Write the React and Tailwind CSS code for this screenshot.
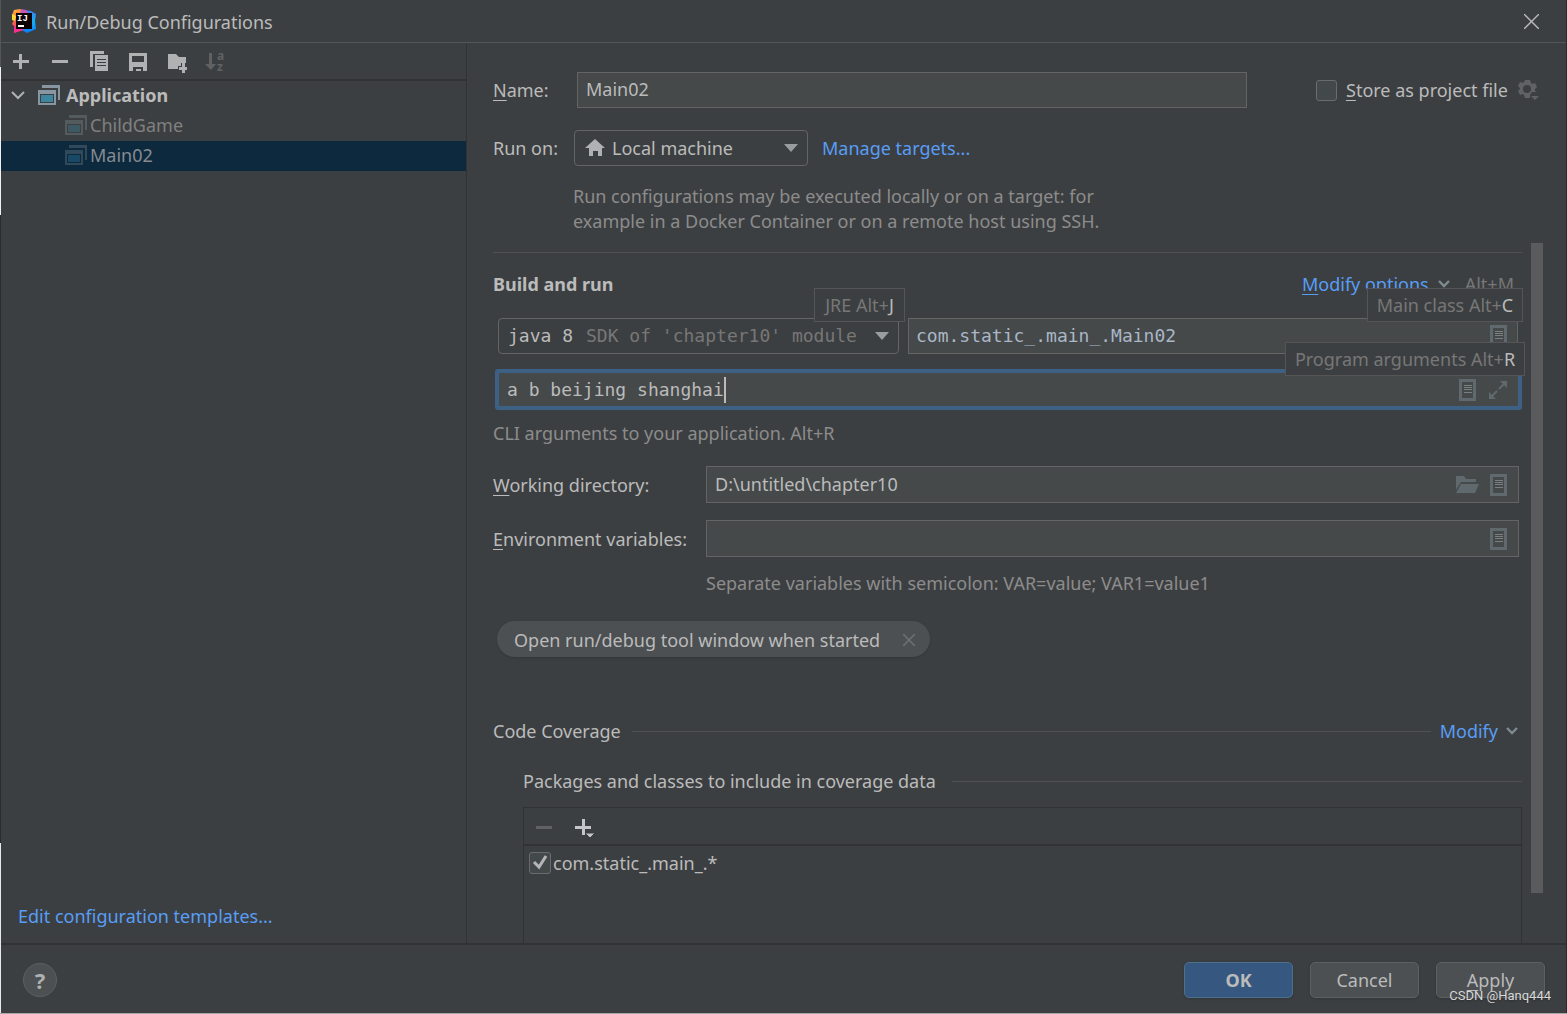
import { useState } from "react";

const labelCls = "shrink-0 text-[#bbbbbb]";
const fieldCls = "flex items-center border border-[#646464] bg-[#45494a] text-[#bbbbbb]";
const tipCls =
  "pointer-events-none absolute z-10 flex h-[34px] items-center justify-center whitespace-nowrap border border-[#555555] bg-[#3c3f41] text-[#777777]";
const monoCls = "font-['DejaVu_Sans_Mono',monospace]";
const keyCls = "underline underline-offset-3";

function Logo() {
  return (
    <svg width="24" height="24" viewBox="0 0 24 24" aria-hidden="true">
      <defs>
        <linearGradient id="warm" x1="0" y1="0" x2="0.3" y2="1">
          <stop offset="0" stopColor="#fcc13c" />
          <stop offset="0.45" stopColor="#fa6a3c" />
          <stop offset="1" stopColor="#fe2d8c" />
        </linearGradient>
        <linearGradient id="cool" x1="0" y1="0" x2="0" y2="1">
          <stop offset="0" stopColor="#3b7df0" />
          <stop offset="0.5" stopColor="#12b0f5" />
          <stop offset="1" stopColor="#087cfa" />
        </linearGradient>
      </defs>
      <path d="M13 1l6 1 5 3-1 7 1 8-9 4-7-4V6z" fill="url(#cool)" />
      <path d="M2 1l6-1 5 3-2 8-1 9-8 4 1-6-3-3 2-4-2-5z" fill="url(#warm)" />
      <path d="M9 0l5 1 3 4H8z" fill="#c757b8" />
      <path d="M0 5l4 2-1 5-3-1z" fill="#fdd835" />
      <path d="M2 17l6 2 4 2-10 3z" fill="#f7308f" />
      <rect x="4" y="4" width="16" height="16" fill="#0a0306" />
      <text x="5" y="12" fill="#ffffff" fontSize="9" fontWeight="700" fontFamily="Liberation Mono, monospace">
        IJ
      </text>
      <path d="M6 16h6v2H6z" fill="#ffffff" />
    </svg>
  );
}

function AppIcon({ frame, fill }) {
  return (
    <svg width="22" height="20" viewBox="0 0 22 20" className="shrink-0" aria-hidden="true">
      <path d="M4 0h18v15h-2V3H4z" fill={frame} />
      <path fillRule="evenodd" d="M0 5h18v15H0zM2 9v9h14V9z" fill={frame} />
      <path d="M3 10h12v7H3z" fill={fill} />
    </svg>
  );
}

function ListIcon() {
  return (
    <svg width="17" height="22" viewBox="0 0 17 22" aria-hidden="true">
      <path fillRule="evenodd" d="M0 0h17v22H0zM3 3v16h11V3z" fill="#5f696e" />
      <path d="M5 6h8v1H5zM5 8h8v1H5zM5 10h8v1H5zM5 13h8v1H5z" fill="#7a7f82" />
    </svg>
  );
}

function Triangle() {
  return (
    <svg width="14" height="8" viewBox="0 0 14 8" className="shrink-0" aria-hidden="true">
      <path d="M0 0h14L7 8z" fill="#9a9da0" />
    </svg>
  );
}

function Chevron() {
  return (
    <svg width="12" height="8" viewBox="0 0 12 8" fill="none" stroke="#7f8b91" strokeWidth="2.4" aria-hidden="true">
      <path d="M1 1l5 5 5-5" />
    </svg>
  );
}

function Toolbar() {
  return (
    <div className="flex h-[38px] shrink-0 items-center gap-[17px] border-b-2 border-[#323232] pl-2 pt-px">
      <button aria-label="Add" className="size-[22px]">
        <svg width="22" height="22" viewBox="0 0 22 22" fill="#afb1b3">
          <path d="M4 9h16v3H4zM10 3h3v15h-3z" />
        </svg>
      </button>
      <button aria-label="Remove" className="size-[22px]">
        <svg width="22" height="22" viewBox="0 0 22 22" fill="#afb1b3">
          <path d="M4 9h16v3H4z" />
        </svg>
      </button>
      <button aria-label="Copy" className="size-[22px]">
        <svg width="22" height="22" viewBox="0 0 22 22" fill="#afb1b3">
          <path d="M3 0h14v3H6v13H3z" />
          <path fillRule="evenodd" d="M8 4h13v16H8zM10 8h9v1h-9zM10 11h9v1h-9zM10 14h9v1h-9z" />
        </svg>
      </button>
      <button aria-label="Save" className="size-[22px]">
        <svg width="22" height="22" viewBox="0 0 22 22" fill="#afb1b3">
          <path fillRule="evenodd" d="M3 2h18v18h-4v-4H7v4H3zM6 5v6h12V5z" />
          <path d="M10 18h5v2h-5z" />
        </svg>
      </button>
      <button aria-label="New folder" className="size-[22px]">
        <svg width="22" height="22" viewBox="0 0 22 22" fill="#afb1b3">
          <path d="M3 3h8l3 3h7v6h-5v3h-3v3H3z" />
          <path d="M17 12h3v4h4v3h-4v3h-3v-3h-3v-3h3z" />
        </svg>
      </button>
      <button aria-label="Sort" disabled className="size-[22px]">
        <svg width="22" height="22" viewBox="0 0 22 22" fill="#5f6163">
          <path d="M5 2h3v11h4l-5 6-6-6h4z" />
          <text x="13" y="9" fontSize="12" fontWeight="700" fontFamily="Open Sans, sans-serif">a</text>
          <text x="13" y="20" fontSize="12" fontWeight="700" fontFamily="Open Sans, sans-serif">z</text>
        </svg>
      </button>
    </div>
  );
}

function Sidebar() {
  return (
    <aside className="flex w-[466px] shrink-0 flex-col border-r border-[#323232]">
      <Toolbar />
      <ul className="flex-1">
        <li>
          <div className="flex h-[30px] items-center pb-[2px] pl-[10px] font-bold text-[#bbbbbb]">
            <svg width="14" height="9" viewBox="0 0 14 9" fill="none" stroke="#afb1b3" strokeWidth="2">
              <path d="M1 1l6 6 6-6" />
            </svg>
            <span className="ml-[13px] mr-[6px] flex">
              <AppIcon frame="#8796a0" fill="#3e86a0" />
            </span>
            Application
          </div>
          <ul>
            <li className="flex h-[30px] items-center gap-[3px] pb-[2px] pl-16 text-[#808080]">
              <AppIcon frame="#535b5f" fill="#3d5a64" />
              ChildGame
            </li>
            <li className="flex h-[30px] items-center gap-[3px] bg-[#0d293e] pb-[2px] pl-16 text-[#858b90]">
              <AppIcon frame="#304a5b" fill="#184a66" />
              Main02
            </li>
          </ul>
        </li>
      </ul>
      <a href="#templates" className="mb-[14px] ml-[17px] text-[#589df6]">
        Edit configuration templates...
      </a>
    </aside>
  );
}

function TargetSection() {
  const [name, setName] = useState("Main02");
  return (
    <section className="h-[200px] shrink-0 pl-[26px] pr-[27px] pt-[29px]">
      <div className="flex items-center">
        <label htmlFor="name" className={`${labelCls} w-[84px]`}>
          <span className={keyCls}>N</span>ame:
        </label>
        <input
          id="name"
          value={name}
          onChange={(e) => setName(e.target.value)}
          className={`${fieldCls} h-9 min-w-0 flex-1 px-2 pb-[2px] outline-none`}
        />
        <label className="ml-[69px] flex items-center text-[#bbbbbb]">
          <input
            type="checkbox"
            className="mr-[9px] size-[21px] appearance-none rounded-[3px] border border-[#6b6b6b] bg-[#43494a]"
          />
          <span className="w-[166px] whitespace-nowrap">
            <span className={keyCls}>S</span>tore as project file
          </span>
        </label>
        <button aria-label="Storage settings" className="ml-[6px]">
          <svg width="21" height="22" viewBox="0 0 21 22" fill="#606264">
            <path
              fillRule="evenodd"
              d="M7 1h5l1 3 1 1 3-1 2 4-2 2v2l2 1h-5l-2 3v3H7l-1-3-1-1-3 1-2-4 2-2V9L0 7l2-4 3 1 1-1zM9 6a4 4 0 1 0 0 8 4 4 0 0 0 0-8z"
            />
            <path d="M13 17h8l-4 4z" />
          </svg>
        </button>
      </div>

      <div className="mt-[22px] flex items-center">
        <label htmlFor="target" className={`${labelCls} w-[81px]`}>Run on:</label>
        <div className="flex h-9 w-[234px] items-center rounded-[4px] border border-[#646464] pl-[10px] pr-[9px]">
          <svg width="20" height="18" viewBox="0 0 20 18" fill="#afb1b3" className="shrink-0">
            <path d="M10 0l10 9h-3v8h-4v-5H8v5H4V9H0z" />
          </svg>
          <select id="target" className="ml-[7px] flex-1 appearance-none text-[#bbbbbb] outline-none">
            <option>Local machine</option>
          </select>
          <Triangle />
        </div>
        <a href="#targets" className="ml-[14px] text-[#589df6]">Manage targets...</a>
      </div>

      <p className="ml-[80px] mt-[18px] w-[550px] leading-[25px] text-[#8c8c8c]">
        Run configurations may be executed locally or on a target: for
        <br />
        example in a Docker Container or on a remote host using SSH.
      </p>
    </section>
  );
}

function RunSection() {
  const [mainClass, setMainClass] = useState("com.static_.main_.Main02");
  const [args, setArgs] = useState("a b beijing shanghai");
  const [dir, setDir] = useState("D:\\untitled\\chapter10");
  const [env, setEnv] = useState("");

  return (
    <>
      <div className="mt-[18px] flex h-[26px] items-center">
        <h2 className="flex-1 font-bold text-[#bbbbbb]">Build and run</h2>
        <button className="flex items-center gap-[9px] text-[#589df6]">
          <span>
            <span className={keyCls}>M</span>odify options
          </span>
          <Chevron />
        </button>
        <span className="ml-[15px] mr-[8px] text-[#777777]">Alt+M</span>
      </div>

      <div className="mt-[21px] flex h-9 gap-[9px] pl-[5px] pr-1">
        <div className="relative flex w-[401px] shrink-0 items-center rounded-[4px] border border-[#646464] px-[9px]">
          <select aria-label="JRE" className={`${monoCls} appearance-none text-[#bbbbbb] outline-none`}>
            <option>java 8</option>
          </select>
          <span className={`${monoCls} ml-[12px] flex-1 whitespace-nowrap text-[#777777]`}>
            SDK of 'chapter10' module
          </span>
          <Triangle />
          <div className={`${tipCls} -right-[7px] -top-[31px] w-[91px]`}>
            JRE Alt+<span className="text-[#bbbbbb]">J</span>
          </div>
        </div>
        <div className={`${fieldCls} relative min-w-0 flex-1 pl-[7px] pr-[10px]`}>
          <input
            aria-label="Main class"
            value={mainClass}
            onChange={(e) => setMainClass(e.target.value)}
            className={`${monoCls} min-w-0 flex-1 text-[#a9b7c6] outline-none`}
          />
          <button aria-label="Browse classes">
            <ListIcon />
          </button>
          <div className={`${tipCls} -right-[6px] -top-[31px] w-[156px]`}>
            Main class Alt+<span className="text-[#bbbbbb]">C</span>
          </div>
        </div>
      </div>

      <div className="relative ml-[2px] mt-[15px] flex h-[41px] items-center rounded-[3px] border-4 border-[#3d6185] bg-[#45494a] pl-[8px] pr-[11px]">
        <div className="flex flex-1 items-center">
          <input
            aria-label="Program arguments"
            value={args}
            onChange={(e) => setArgs(e.target.value)}
            className={`${monoCls} field-sizing-content text-[#bbbbbb] caret-transparent outline-none`}
          />
          <span className="h-[26px] w-[2px] bg-[#bbbbbb]" />
        </div>
        <button aria-label="Insert macros">
          <ListIcon />
        </button>
        <button aria-label="Expand" className="ml-[13px]">
          <svg width="18" height="18" viewBox="0 0 18 18" fill="#5f696e" stroke="#5f696e">
            <path d="M11 0h7v7zM0 11v7h7z" stroke="none" />
            <path d="M15 3l-5 5M3 15l5-5" strokeWidth="2" />
          </svg>
        </button>
        <div className={`${tipCls} -right-[7px] -top-[31px] w-[240px]`}>
          Program arguments Alt+<span className="text-[#bbbbbb]">R</span>
        </div>
      </div>
      <p className="mt-[10px] text-[#8c8c8c]">CLI arguments to your application. Alt+R</p>

      <div className="mt-5 flex items-center pr-[3px]">
        <label htmlFor="dir" className={`${labelCls} w-[213px]`}>
          <span className={keyCls}>W</span>orking directory:
        </label>
        <div className={`${fieldCls} h-[37px] flex-1 pl-2 pr-[11px]`}>
          <input
            id="dir"
            value={dir}
            onChange={(e) => setDir(e.target.value)}
            className="min-w-0 flex-1 pb-[2px] outline-none"
          />
          <button aria-label="Browse directories">
            <svg width="23" height="17" viewBox="0 0 23 17" fill="#5f696e">
              <path d="M0 0h8l2 3h10v3H5L0 14z" />
              <path d="M5 8h18l-4 9H0z" />
            </svg>
          </button>
          <button aria-label="Insert macros" className="ml-[11px]">
            <ListIcon />
          </button>
        </div>
      </div>

      <div className="mt-[17px] flex items-center pr-[3px]">
        <label htmlFor="env" className={`${labelCls} w-[213px]`}>
          <span className={keyCls}>E</span>nvironment variables:
        </label>
        <div className={`${fieldCls} h-[37px] flex-1 pl-2 pr-[11px]`}>
          <input
            id="env"
            value={env}
            onChange={(e) => setEnv(e.target.value)}
            className="min-w-0 flex-1 outline-none"
          />
          <button aria-label="Edit variables">
            <ListIcon />
          </button>
        </div>
      </div>
      <p className="ml-[213px] mt-[13px] text-[#8c8c8c]">
        Separate variables with semicolon: VAR=value; VAR1=value1
      </p>

      <div className="ml-1 mt-[25px] flex h-9 w-[433px] items-center rounded-full bg-[#4c5052] pl-[17px] pr-[15px] pt-[2px] text-[#bbbbbb] shadow">
        <span className="flex-1 whitespace-nowrap">Open run/debug tool window when started</span>
        <button aria-label="Remove option">
          <svg width="12" height="12" viewBox="0 0 12 12" stroke="#6e7274" strokeWidth="1.5">
            <path d="M0 0l12 12M12 0L0 12" />
          </svg>
        </button>
      </div>
    </>
  );
}

function CoverageSection() {
  const [checked, setChecked] = useState(true);
  return (
    <>
      <div className="mt-[61px] flex items-center">
        <h3 className={labelCls}>Code Coverage</h3>
        <div className="ml-[11px] mr-[9px] h-px flex-1 bg-[#515151]" />
        <button className="mr-1 flex items-center gap-2 text-[#589df6]">
          Modify
          <Chevron />
        </button>
      </div>
      <div className="ml-[30px] mt-6 flex items-center">
        <h4 className={labelCls}>Packages and classes to include in coverage data</h4>
        <div className="ml-4 h-px flex-1 bg-[#515151]" />
      </div>
      <div className="ml-[30px] mt-[13px] flex-1 border-x border-t border-[#323232]">
        <div className="flex h-[38px] items-center gap-[17px] border-b-2 border-[#323232] pl-[9px] pt-px">
          <button aria-label="Remove pattern" disabled>
            <svg width="22" height="22" viewBox="0 0 22 22" fill="#5f6163">
              <path d="M3 10h16v3H3z" />
            </svg>
          </button>
          <button aria-label="Add pattern">
            <svg width="24" height="22" viewBox="0 0 24 22" fill="#c4c6c8">
              <path d="M3 10h16v3H3zM10 3h3v16h-3z" />
              <path d="M13 17h10l-5 5z" stroke="#3c3f41" />
            </svg>
          </button>
        </div>
        <label className="flex h-[34px] items-center gap-[2px] pl-[5px] text-[#bbbbbb]">
          <span className="relative flex">
            <input
              type="checkbox"
              checked={checked}
              onChange={(e) => setChecked(e.target.checked)}
              className="size-[22px] appearance-none rounded-[3px] border border-[#6b6b6b] bg-[#43494a]"
            />
            {checked && (
              <svg
                width="22"
                height="22"
                viewBox="0 0 22 22"
                fill="none"
                stroke="#b5b5b5"
                strokeWidth="3"
                className="pointer-events-none absolute inset-0"
              >
                <path d="M5 10l5 5 7-11" />
              </svg>
            )}
          </span>
          com.static_.main_.*
        </label>
      </div>
    </>
  );
}

function Footer() {
  const plain = "h-9 w-[109px] rounded-[5px] border border-[#5e6060] bg-[#4c5052] text-[#bbbbbb] shadow";
  return (
    <footer className="flex h-[70px] shrink-0 items-center border-t-2 border-[#323232] pl-[22px] pr-[21px] pt-[2px]">
      <button
        aria-label="Help"
        className="size-[34px] rounded-full border border-[#5e6060] bg-[#4c5052] text-[22px] font-bold text-[#afb1b3]"
      >
        ?
      </button>
      <div className="ml-auto flex gap-[17px]">
        <button className="h-9 w-[109px] rounded-[5px] border border-[#4c708c] bg-[#365880] font-bold text-[#bbbbbb] shadow">
          OK
        </button>
        <button className={plain}>Cancel</button>
        <button className={plain}>
          <span className={keyCls}>A</span>pply
        </button>
      </div>
    </footer>
  );
}

export default function App() {
  return (
    <div className="relative flex h-screen flex-col border-b border-[#a8a8a8] bg-[#3c3f41] font-['Noto_Sans',sans-serif] text-[18px] leading-[26px]">
      <div className="flex min-h-0 flex-1">
        {/* sliver of the editor window behind the dialog */}
        <div className="flex w-px shrink-0 flex-col bg-[#2b2b2b]">
          <div className="h-[67px] bg-[#555555]" />
          <div className="h-[148px] bg-[#f0f0f0]" />
          <div className="flex-1" />
          <div className="h-[170px] bg-[#e8e8e8]" />
        </div>

        <div className="flex min-w-0 flex-1 flex-col border-r border-[#2b2b2b]">
          <header className="flex h-[43px] shrink-0 items-center border-b border-[#515658] pl-[11px] pr-[27px]">
            <Logo />
            <h1 className="ml-[10px] flex-1 pt-px text-[#bbbbbb]">Run/Debug Configurations</h1>
            <button aria-label="Close">
              <svg width="15" height="15" viewBox="0 0 15 15" stroke="#bbbbbb" strokeWidth="1.4">
                <path d="M0 0l15 15M15 0L0 15" />
              </svg>
            </button>
          </header>

          <div className="flex min-h-0 flex-1">
            <Sidebar />
            <main className="flex min-w-0 flex-1 flex-col">
              <TargetSection />
              <div className="flex min-h-0 flex-1 pl-[26px] pr-[23px]">
                <div className="flex min-w-0 flex-1 flex-col pt-[9px]">
                  <div className="h-px shrink-0 bg-[#515151]" />
                  <RunSection />
                  <CoverageSection />
                </div>
                <div className="mb-[50px] ml-[9px] w-3 shrink-0 bg-[#5a5b5d]" />
              </div>
            </main>
          </div>

          <Footer />
        </div>
      </div>

      <span className="pointer-events-none absolute bottom-[9px] right-4 font-['Roboto',sans-serif] text-[13px] leading-4 text-[#d8d8d8] text-shadow-sm">
        CSDN @Hanq444
      </span>
    </div>
  );
}
